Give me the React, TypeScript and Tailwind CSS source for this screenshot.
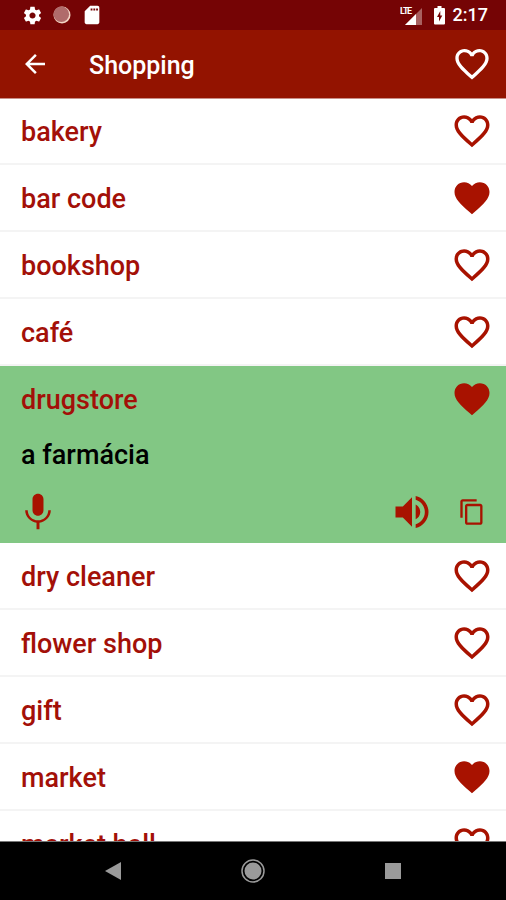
import { useState } from "react";

const HEART_FILLED =
  "M12 21.35l-1.45-1.32C5.4 15.36 2 12.28 2 8.5 2 5.42 4.42 3 7.5 3c1.74 0 3.41.81 4.5 2.09C13.09 3.81 14.76 3 16.5 3 19.58 3 22 5.42 22 8.5c0 3.78-3.4 6.86-8.55 11.54L12 21.35z";
const HEART_OUTLINE =
  "M16.5 3c-1.74 0-3.41.81-4.5 2.09C10.91 3.81 9.24 3 7.5 3 4.42 3 2 5.42 2 8.5c0 3.78 3.4 6.86 8.55 11.54L12 21.35l1.45-1.32C18.6 15.36 22 12.28 22 8.5 22 5.42 19.58 3 16.5 3zm-4.4 15.55l-.1.1-.1-.1C7.14 14.24 4 11.39 4 8.5 4 6.5 5.5 5 7.5 5c1.54 0 3.04.99 3.57 2.36h1.87C13.46 5.99 14.96 5 16.5 5c2 0 3.5 1.5 3.5 3.5 0 2.89-3.14 5.74-7.9 10.05z";
const BACK = "M20 11H7.83l5.59-5.59L12 4l-8 8 8 8 1.41-1.41L7.83 13H20v-2z";
const MIC =
  "M12 14c1.66 0 2.99-1.34 2.99-3L15 5c0-1.66-1.34-3-3-3S9 3.34 9 5v6c0 1.66 1.34 3 3 3zm5.6-3c0 3.2-2.6 5.500-5.600 5.500S6.400 14.200 6.400 11H5c0 3.500 2.800 6.300 6.200 6.800V21.400h1.600v-3.600C16.200 17.300 19 14.500 19 11h-1.400z";
const VOLUME =
  "M3 9v6h4l5 5V4L7 9H3zm13.5 3c0-1.77-1.02-3.29-2.5-4.03v8.05c1.48-.73 2.5-2.25 2.5-4.02zM14 3.23v2.06c2.89.86 5 3.54 5 6.71s-2.11 5.85-5 6.71v2.06c4.01-.91 7-4.49 7-8.77s-2.99-7.86-7-8.77z";
const COPY =
  "M16 1H4c-1.1 0-2 .9-2 2v14h2V3h12V1zm3 4H8c-1.1 0-2 .9-2 2v14c0 1.1.9 2 2 2h11c1.1 0 2-.9 2-2V7c0-1.1-.9-2-2-2zm0 16H8V7h11v14z";
const GEAR =
  "M19.43 12.98c.04-.32.07-.64.07-.98s-.03-.66-.07-.98l2.11-1.65c.19-.15.24-.42.12-.64l-2-3.46c-.12-.22-.39-.3-.61-.22l-2.49 1c-.52-.4-1.08-.73-1.69-.98l-.38-2.65C14.46 2.18 14.25 2 14 2h-4c-.25 0-.46.18-.49.42l-.38 2.65c-.61.25-1.17.59-1.69.98l-2.49-1c-.23-.09-.49 0-.61.22l-2 3.46c-.13.22-.07.49.12.64l2.11 1.65c-.04.32-.07.65-.07.98s.03.66.07.98l-2.11 1.65c-.19.15-.24.42-.12.64l2 3.46c.12.22.39.3.61.22l2.49-1c.52.4 1.08.73 1.69.98l.38 2.65c.03.24.24.42.49.42h4c.25 0 .46-.18.49-.42l.38-2.65c.61-.25 1.17-.59 1.69-.98l2.49 1c.23.09.49 0 .61-.22l2-3.46c.12-.22.07-.49-.12-.64l-2.11-1.65zM12 15.5c-1.93 0-3.5-1.57-3.5-3.5s1.57-3.5 3.5-3.5 3.5 1.57 3.5 3.5-1.57 3.5-3.5 3.5z";
const SD_CARD =
  "M18 2h-8L4.02 8 4 20c0 1.1.9 2 2 2h12c1.1 0 2-.9 2-2V4c0-1.1-.9-2-2-2zm-5.500 5h-2V5h2v2zm3 0h-2V5h2v2zm3 0h-2V5h2v2z";

function Icon({ path, className }: { path: string; className: string }) {
  return (
    <svg viewBox="0 0 24 24" fill="currentColor" aria-hidden="true" className={`block shrink-0 ${className}`}>
      <path d={path} />
    </svg>
  );
}

type Word = { term: string; translation: string; liked: boolean };

const WORDS: Word[] = [
  { term: "bakery", translation: "a padaria", liked: false },
  { term: "bar code", translation: "o código de barras", liked: true },
  { term: "bookshop", translation: "a livraria", liked: false },
  { term: "café", translation: "o café", liked: false },
  { term: "drugstore", translation: "a farmácia", liked: true },
  { term: "dry cleaner", translation: "a lavandaria", liked: false },
  { term: "flower shop", translation: "a florista", liked: false },
  { term: "gift", translation: "o presente", liked: false },
  { term: "market", translation: "o mercado", liked: true },
  { term: "market hall", translation: "o mercado coberto", liked: false },
];

function StatusBar() {
  return (
    <div className="flex h-[30px] shrink-0 items-center justify-between bg-[#750405] pl-[22px] pr-[18px] text-white">
      <div className="flex items-center gap-[10px]">
        <Icon path={GEAR} className="size-[21px]" />
        <svg viewBox="0 0 18 18" aria-hidden="true" className="block size-[18px]">
          <circle cx="9" cy="9" r="8.500" fill="#f3d5c6" />
          <circle cx="8.300" cy="8.300" r="7.800" fill="#b06b6b" />
        </svg>
        <Icon path={SD_CARD} className="size-[22px]" />
      </div>
      <div className="flex items-center">
        <svg viewBox="0 0 24 20" aria-hidden="true" className="mr-[10px] block h-5 w-6">
          <path d="M22 3v17H5z" fill="#a86060" />
          <path d="M16 9v11H5z" fill="#fff" />
          <text x="0" y="9" fontSize="9" fontWeight="700" fill="#fff" fontFamily="Roboto, sans-serif">
            <tspan x="0">L</tspan>
            <tspan x="3">T</tspan>
            <tspan x="7">E</tspan>
          </text>
        </svg>
        <svg viewBox="0 0 11 20" aria-hidden="true" className="block h-5 w-[11px]">
          <path
            fill="#fff"
            fillRule="evenodd"
            d="M3.500 1h4v2H10a1 1 0 0 1 1 1v14.500a1 1 0 0 1-1 1H1a1 1 0 0 1-1-1V4a1 1 0 0 1 1-1h2.500zM6.300 6L3 12h2v4.500L8.300 10.500h-2z"
          />
        </svg>
        <span className="ml-2 text-[18px] font-medium leading-5">2:17</span>
      </div>
    </div>
  );
}

export default function App() {
  const [liked, setLiked] = useState(() => WORDS.map((w) => w.liked));
  const [open, setOpen] = useState(4);
  const toggle = (i: number) => setLiked((all) => all.map((v, n) => (n === i ? !v : v)));

  return (
    <div className="flex h-screen flex-col bg-white font-['Roboto',sans-serif]">
      <StatusBar />
      <header className="flex h-[69px] shrink-0 items-center border-b border-[#c98f88] bg-[#931300] pl-5 pr-[14px] text-white">
        <button type="button" aria-label="Back">
          <Icon path={BACK} className="size-[30px]" />
        </button>
        <h1 className="ml-[39px] flex-1 pt-1 text-[25px] font-medium leading-8">Shopping</h1>
        <button type="button" aria-label="Favourites">
          <Icon path={HEART_OUTLINE} className="size-10" />
        </button>
      </header>

      <ul className="-mt-px min-h-0 flex-1 overflow-hidden text-[27px] font-medium leading-8 text-[#a31008]">
        {WORDS.map((word, i) => {
          const active = open === i;
          return (
            <li key={word.term} className={active ? "bg-[#82c784]" : "border-b-2 border-[#f4f4f4]"}>
              <div className="flex h-[65px] items-center pl-[21px] pr-[13px]">
                <button
                  type="button"
                  aria-expanded={active}
                  onClick={() => setOpen(i)}
                  className="flex-1 pt-0.5 text-left"
                >
                  {word.term}
                </button>
                <button
                  type="button"
                  aria-label={`Favourite ${word.term}`}
                  aria-pressed={liked[i]}
                  onClick={() => toggle(i)}
                >
                  <Icon path={liked[i] ? HEART_FILLED : HEART_OUTLINE} className="size-[42px] text-[#a81200]" />
                </button>
              </div>
              {active && (
                <>
                  <p className="py-[8px] pl-[21px] text-black">{word.translation}</p>
                  <div className="flex h-16 items-center pl-4 pr-5 pt-0.5 text-[#a81200]">
                    <button type="button" aria-label="Record">
                      <Icon path={MIC} className="size-11" />
                    </button>
                    <button type="button" aria-label="Listen" className="ml-auto">
                      <Icon path={VOLUME} className="size-11" />
                    </button>
                    <button type="button" aria-label="Copy" className="ml-6">
                      <Icon path={COPY} className="size-7" />
                    </button>
                  </div>
                </>
              )}
            </li>
          );
        })}
      </ul>

      <nav className="flex h-[59px] shrink-0 items-center justify-center border-t border-[#777777] bg-black text-[#9a9a9a]">
        <button type="button" aria-label="Back" className="flex w-[140px] justify-center">
          <svg viewBox="0 0 16 18" aria-hidden="true" className="block h-[18px] w-4">
            <path d="M16 0v18L0 9z" fill="currentColor" />
          </svg>
        </button>
        <button type="button" aria-label="Home" className="flex w-[140px] justify-center">
          <svg viewBox="0 0 24 24" aria-hidden="true" className="block size-6">
            <circle cx="12" cy="12" r="11" fill="none" stroke="currentColor" strokeWidth="1.500" />
            <circle cx="12" cy="12" r="8.500" fill="currentColor" />
          </svg>
        </button>
        <button type="button" aria-label="Recent apps" className="flex w-[140px] justify-center">
          <span className="block size-4 bg-[#9a9a9a]" />
        </button>
      </nav>
    </div>
  );
}
